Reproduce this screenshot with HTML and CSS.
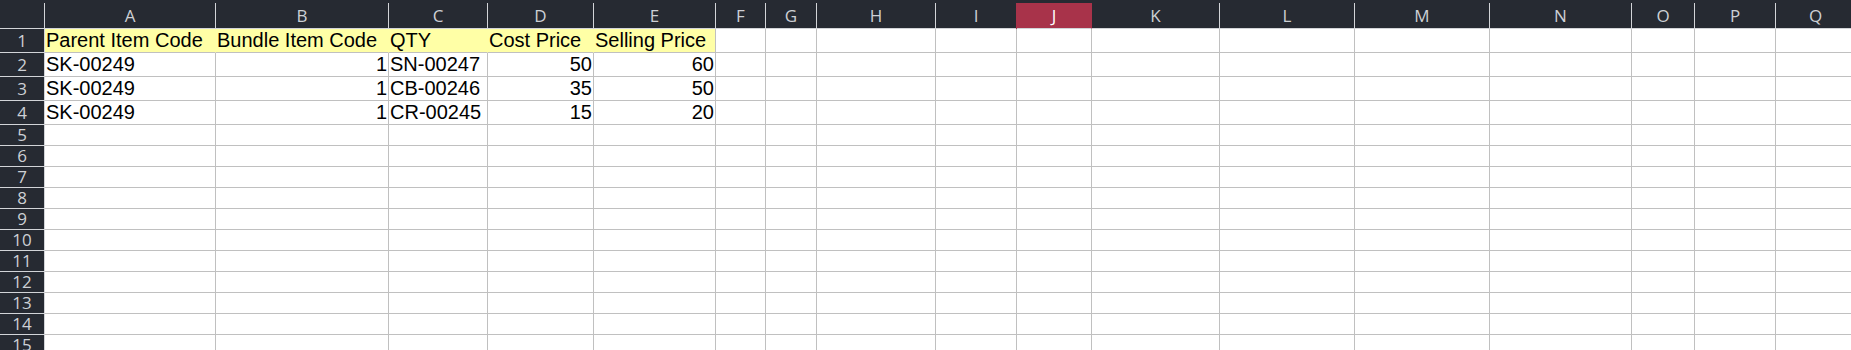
FILE: index.html
```html
<!DOCTYPE html>
<html lang="en">

<head>
    <meta charset="UTF-8">
    <meta name="viewport" content="width=device-width, initial-scale=1.0">
    <title>Bundle Items</title>
    <link rel="stylesheet" href="styles.css">
</head>

<body>
    <div class="topbar"></div>
    <table class="sheet">
        <colgroup>
            <col class="c-row">
            <col style="width: 171px">
            <col style="width: 173px">
            <col style="width: 99px">
            <col style="width: 106px">
            <col style="width: 122px">
            <col style="width: 50px">
            <col style="width: 51px">
            <col style="width: 119px">
            <col style="width: 81px">
            <col style="width: 75px">
            <col style="width: 128px">
            <col style="width: 135px">
            <col style="width: 135px">
            <col style="width: 142px">
            <col style="width: 63px">
            <col style="width: 81px">
            <col style="width: 80px">
        </colgroup>
        <thead>
            <tr>
                <th></th>
                <th>A</th><th>B</th><th>C</th><th>D</th><th>E</th><th>F</th><th>G</th><th>H</th><th>I</th>
                <th class="active">J</th>
                <th>K</th><th>L</th><th>M</th><th>N</th><th>O</th><th>P</th><th>Q</th>
            </tr>
        </thead>
        <tbody>
            <!-- data rows -->
            <tr class="data">
                <th>1</th>
                <td class="hl">Parent Item Code</td>
                <td class="hl">Bundle Item Code</td>
                <td class="hl">QTY</td>
                <td class="hl">Cost Price</td>
                <td class="hl end">Selling Price</td>
                <td></td><td></td><td></td><td></td><td></td><td></td><td></td><td></td><td></td><td></td><td></td><td></td>
            </tr>
            <tr class="data">
                <th>2</th>
                <td>SK-00249</td>
                <td class="num">1</td>
                <td>SN-00247</td>
                <td class="num">50</td>
                <td class="num">60</td>
                <td></td><td></td><td></td><td></td><td></td><td></td><td></td><td></td><td></td><td></td><td></td><td></td>
            </tr>
            <tr class="data">
                <th>3</th>
                <td>SK-00249</td>
                <td class="num">1</td>
                <td>CB-00246</td>
                <td class="num">35</td>
                <td class="num">50</td>
                <td></td><td></td><td></td><td></td><td></td><td></td><td></td><td></td><td></td><td></td><td></td><td></td>
            </tr>
            <tr class="data">
                <th>4</th>
                <td>SK-00249</td>
                <td class="num">1</td>
                <td>CR-00245</td>
                <td class="num">15</td>
                <td class="num">20</td>
                <td></td><td></td><td></td><td></td><td></td><td></td><td></td><td></td><td></td><td></td><td></td><td></td>
            </tr>
            <!-- empty rows -->
            <tr><th>5</th><td></td><td></td><td></td><td></td><td></td><td></td><td></td><td></td><td></td><td></td><td></td><td></td><td></td><td></td><td></td><td></td><td></td></tr>
            <tr><th>6</th><td></td><td></td><td></td><td></td><td></td><td></td><td></td><td></td><td></td><td></td><td></td><td></td><td></td><td></td><td></td><td></td><td></td></tr>
            <tr><th>7</th><td></td><td></td><td></td><td></td><td></td><td></td><td></td><td></td><td></td><td></td><td></td><td></td><td></td><td></td><td></td><td></td><td></td></tr>
            <tr><th>8</th><td></td><td></td><td></td><td></td><td></td><td></td><td></td><td></td><td></td><td></td><td></td><td></td><td></td><td></td><td></td><td></td><td></td></tr>
            <tr><th>9</th><td></td><td></td><td></td><td></td><td></td><td></td><td></td><td></td><td></td><td></td><td></td><td></td><td></td><td></td><td></td><td></td><td></td></tr>
            <tr><th>10</th><td></td><td></td><td></td><td></td><td></td><td></td><td></td><td></td><td></td><td></td><td></td><td></td><td></td><td></td><td></td><td></td><td></td></tr>
            <tr><th>11</th><td></td><td></td><td></td><td></td><td></td><td></td><td></td><td></td><td></td><td></td><td></td><td></td><td></td><td></td><td></td><td></td><td></td></tr>
            <tr><th>12</th><td></td><td></td><td></td><td></td><td></td><td></td><td></td><td></td><td></td><td></td><td></td><td></td><td></td><td></td><td></td><td></td><td></td></tr>
            <tr><th>13</th><td></td><td></td><td></td><td></td><td></td><td></td><td></td><td></td><td></td><td></td><td></td><td></td><td></td><td></td><td></td><td></td><td></td></tr>
            <tr><th>14</th><td></td><td></td><td></td><td></td><td></td><td></td><td></td><td></td><td></td><td></td><td></td><td></td><td></td><td></td><td></td><td></td><td></td></tr>
            <tr><th>15</th><td></td><td></td><td></td><td></td><td></td><td></td><td></td><td></td><td></td><td></td><td></td><td></td><td></td><td></td><td></td><td></td><td></td></tr>
        </tbody>
    </table>
</body>

</html>
```

FILE: styles.css
```css
body {
    margin: 0;
    background-color: white;
    overflow: hidden;
}

.topbar {
    height: 3px;
    background-color: #262a32;
}

.sheet {
    border-collapse: separate;
    border-spacing: 0;
    table-layout: fixed;
    width: 1856px;
}

.c-row {
    width: 45px;
}

.sheet th,
.sheet td {
    box-sizing: border-box;
    padding: 0 1px;
    border-right: 1px solid #c0c0c0;
    border-bottom: 1px solid #c0c0c0;
    white-space: nowrap;
}

.sheet td {
    overflow: hidden;
}

/* column and row headers */
.sheet th {
    background-color: #262a32;
    color: #cdd0d5;
    font-family: "Open Sans", sans-serif;
    font-size: 17px;
    font-weight: normal;
    line-height: 20px;
    text-align: center;
    vertical-align: middle;
    border-color: #d2d4d8;
}

.sheet thead th {
    height: 26px;
}

.sheet th.active {
    background-color: #a8334a;
    color: white;
    border-right-color: #a8334a;
    box-shadow: -1px 0 0 #a8334a;
}

.sheet td {
    font-family: "Liberation Sans", Arial, sans-serif;
    font-size: 20px;
    line-height: 23px;
    color: black;
    vertical-align: bottom;
}

.sheet tr {
    height: 21px;
}

.sheet tr.data {
    height: 24px;
}

.num {
    text-align: right;
}

.hl {
    background-color: #ffffa6;
}

.sheet td.hl {
    border-right-color: #ffffa6;
}

.sheet td.hl.end {
    border-right-color: #c0c0c0;
}
```
